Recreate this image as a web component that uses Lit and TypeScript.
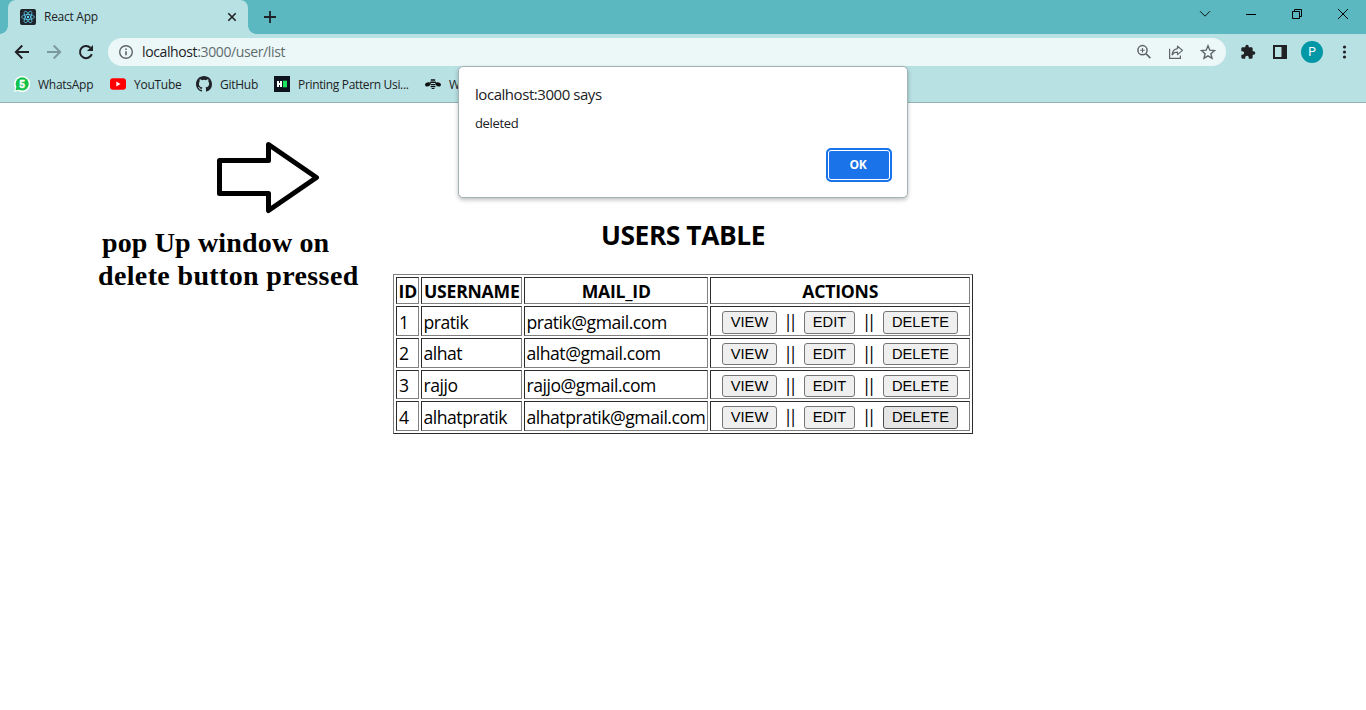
import { LitElement, html, css } from "lit";
import { customElement } from "lit/decorators.js";
import { classMap } from "lit/directives/class-map.js";

const users = [
  { id: 1, name: "pratik", mail: "pratik@gmail.com" },
  { id: 2, name: "alhat", mail: "alhat@gmail.com" },
  { id: 3, name: "rajjo", mail: "rajjo@gmail.com" },
  { id: 4, name: "alhatpratik", mail: "alhatpratik@gmail.com" },
];

@customElement("browser-chrome")
class BrowserChrome extends LitElement {
  static styles = css`
    :host { display: block; height: 103px; font-family: "Open Sans", sans-serif; color: #202124; }
    svg { display: block; flex: none; }
    .strip { display: flex; height: 34px; background: #5bb8c1; padding-left: 8px; box-sizing: border-box; }
    .tab { display: flex; align-items: center; width: 240px; height: 34px; box-sizing: border-box; background: #b8e1e4; border-radius: 8px 8px 0 0; padding: 0 10px 0 12px; }
    .curve { width: 8px; height: 8px; align-self: flex-end; background: radial-gradient(circle at 100% 0, transparent 7.5px, #b8e1e4 8px); }
    .curve.left { margin-left: -8px; background: radial-gradient(circle at 0 0, transparent 7.5px, #b8e1e4 8px); }
    .title { flex: 1; margin-left: 8px; font-size: 12px; line-height: 16px; letter-spacing: -0.27px; }
    .plus { margin: 11px 0 0 8px; }
    .win { margin-left: auto; display: flex; }
    .win span { width: 46px; height: 28px; display: flex; align-items: center; justify-content: center; }
    .bar { display: flex; align-items: center; height: 36px; background: #b8e1e4; padding-left: 14px; }
    .nav { display: flex; gap: 16px; width: 94px; }
    .omni { display: flex; align-items: center; width: 1118px; height: 28px; border-radius: 14px; background: #ecf8f8; box-sizing: border-box; padding: 0 10px; }
    .url { flex: 1; margin-left: 8px; font-size: 14px; line-height: 20px; letter-spacing: -0.38px; color: #202124; }
    .url span { color: #5f6b6e; }
    .acts { display: flex; gap: 16px; }
    .tools { display: flex; align-items: center; gap: 16px; margin-left: 14px; }
    .avatar { width: 22px; height: 22px; border-radius: 50%; background: #0097a7; color: #fff; font: 12px/22px Roboto, sans-serif; text-align: center; margin: 0 -3px; }
    .marks { display: flex; align-items: center; height: 32px; background: #b8e1e4; padding: 0 0 4px 14px; font-size: 12px; box-sizing: border-box; }
    .mark { display: flex; align-items: center; gap: 8px; height: 16px; margin-right: 16px; white-space: nowrap; letter-spacing: -0.27px; }
    .mark.a { width: 80px; }
    .mark.b { width: 70px; }
    .mark.c { width: 62px; }
    .mark.d { width: 135px; letter-spacing: -0.34px; }
    .five { font: 700 10.5px Roboto, sans-serif; letter-spacing: 0; }
    .line { height: 1px; background: #91b3b7; }
  `;
  render() {
    return html`
      <div class="strip">
        <div class="curve left"></div>
        <div class="tab">
          <svg width="16" height="16" viewBox="0 0 16 16"><rect width="16" height="16" rx="2" fill="#20232a"/><g fill="none" stroke="#61dafb" stroke-width=".7"><ellipse cx="8" cy="8" rx="6.4" ry="2.5"/><ellipse cx="8" cy="8" rx="6.4" ry="2.5" transform="rotate(60 8 8)"/><ellipse cx="8" cy="8" rx="6.4" ry="2.5" transform="rotate(120 8 8)"/></g><circle cx="8" cy="8" r="1.2" fill="#61dafb"/></svg>
          <span class="title">React App</span>
          <svg width="12" height="12" viewBox="0 0 12 12"><path d="M2.3 2.3l7.4 7.4M9.7 2.3l-7.4 7.4" stroke="#202124" stroke-width="1.6"/></svg>
        </div>
        <div class="curve"></div>
        <svg class="plus" width="12" height="12" viewBox="0 0 12 12"><path d="M6 0v12M0 6h12" stroke="#202124" stroke-width="1.8"/></svg>
        <div class="win">
          <span><svg width="12" height="8" viewBox="0 0 12 8"><path d="M1 1.2l5 5 5-5" fill="none" stroke="#111" stroke-width="1"/></svg></span>
          <span><svg width="10" height="10"><path d="M0 5.5h10" stroke="#000"/></svg></span>
          <span><svg width="10" height="10" viewBox="0 0 10 10"><path d="M.5 2.5h7v7h-7zM2.5 2.5v-2h7v7h-2" fill="none" stroke="#000"/></svg></span>
          <span><svg width="12" height="12" viewBox="0 0 12 12"><path d="M1 1l10 10M11 1L1 11" stroke="#000"/></svg></span>
        </div>
      </div>
      <div class="bar">
        <div class="nav">
          <svg width="16" height="16" viewBox="0 0 16 16"><path d="M15 8H2M8.3 1.5L1.8 8l6.5 6.5" fill="none" stroke="#202124" stroke-width="1.9"/></svg>
          <svg width="16" height="16" viewBox="0 0 16 16"><path d="M1 8h13M7.7 1.5L14.2 8l-6.5 6.5" fill="none" stroke="#7b999c" stroke-width="1.9"/></svg>
          <svg width="16" height="16" viewBox="0 0 16 16"><path d="M13.8 10.2A6.1 6.1 0 1 1 12.4 3.8" fill="none" stroke="#202124" stroke-width="2"/><path d="M15 1v6H9z" fill="#202124"/></svg>
        </div>
        <div class="omni">
          <svg width="16" height="16" viewBox="0 0 16 16"><circle cx="8" cy="8" r="6.3" fill="none" stroke="#5f6368" stroke-width="1.4"/><path d="M8 7.2v4M8 4.4v1.6" stroke="#5f6368" stroke-width="1.6"/></svg>
          <div class="url">localhost<span>:3000/user/list</span></div>
          <div class="acts">
            <svg width="16" height="16" viewBox="0 0 16 16"><g fill="none" stroke="#5f6368" stroke-width="1.5"><circle cx="6.5" cy="6.2" r="4.6"/><path d="M9.9 9.6l4.5 4.5"/><path d="M6.5 4v4.4M4.3 6.2h4.4" stroke-width="1.1"/></g></svg>
            <svg width="16" height="16" viewBox="0 0 16 16"><g fill="none" stroke="#5f6368" stroke-width="1.2"><path d="M1.6 4.8v9.6h10.8v-2.8"/><path d="M9.5 2.2l5 4.2-5 4.2V8.2C7 8.2 5.3 9 4.1 10.8 4.4 7.6 6.2 5 9.5 4.6z" stroke-linejoin="round"/></g></svg>
            <svg width="16" height="16" viewBox="0 0 16 16"><path d="M8 1.8l1.8 4.4 4.8.4-3.7 3.1 1.1 4.6L8 11.8l-4 2.5 1.1-4.6L1.4 6.6l4.8-.4z" fill="none" stroke="#5f6368" stroke-width="1.4"/></svg>
          </div>
        </div>
        <div class="tools">
          <svg width="16" height="16" viewBox="0 0 24 24"><path d="M20.5 11H19V7c0-1.1-.9-2-2-2h-4V3.5a2.5 2.5 0 0 0-5 0V5H4c-1.1 0-2 .9-2 2v3.8h1.5a2.7 2.7 0 0 1 0 5.4H2V20c0 1.1.9 2 2 2h3.8v-1.5a2.7 2.7 0 0 1 5.4 0V22H17c1.1 0 2-.9 2-2v-4h1.5a2.5 2.5 0 0 0 0-5z" fill="#202124"/></svg>
          <svg width="16" height="16" viewBox="0 0 16 16"><path d="M1 1h14v14H1zM3 3v10h6.5V3z" fill="#202124" fill-rule="evenodd"/></svg>
          <div class="avatar">P</div>
          <svg width="16" height="16" viewBox="0 0 16 16" fill="#202124"><circle cx="8.5" cy="3" r="1.6"/><circle cx="8.5" cy="8" r="1.6"/><circle cx="8.5" cy="13" r="1.6"/></svg>
        </div>
      </div>
      <div class="marks">
        <div class="mark a"><svg width="16" height="16" viewBox="0 0 16 16"><path d="M8 0a8 8 0 1 1-3.5 15L0 16l1.1-4A8 8 0 0 1 8 0z" fill="#fff"/><circle cx="8.2" cy="7.8" r="6.6" fill="#12c24b"/><path d="M1.5 14.5l.9-4 3 2.9z" fill="#12c24b"/><text class="five" x="8.1" y="11.6" fill="#fff" stroke="#fff" stroke-width=".4" text-anchor="middle">5</text></svg>WhatsApp</div>
        <div class="mark b"><svg width="16" height="16" viewBox="0 0 16 16"><rect y="2.3" width="16" height="11.4" rx="3" fill="#f00"/><path d="M6.3 5.6v4.8l4.2-2.4z" fill="#fff"/></svg>YouTube</div>
        <div class="mark c"><svg width="16" height="16" viewBox="0 0 16 16"><path fill="#1f2328" d="M8 0C3.58 0 0 3.58 0 8c0 3.54 2.29 6.53 5.47 7.59.4.07.55-.17.55-.38 0-.19-.01-.82-.01-1.49-2.01.37-2.53-.49-2.69-.94-.09-.23-.48-.94-.82-1.13-.28-.15-.68-.52-.01-.53.63-.01 1.08.58 1.23.82.72 1.21 1.87.87 2.33.66.07-.52.28-.87.51-1.07-1.78-.2-3.64-.89-3.64-3.95 0-.87.31-1.59.82-2.15-.08-.2-.36-1.02.08-2.12 0 0 .67-.21 2.2.82a7.6 7.6 0 0 1 4 0c1.53-1.04 2.2-.82 2.2-.82.44 1.1.16 1.92.08 2.12.51.56.82 1.27.82 2.15 0 3.07-1.87 3.75-3.65 3.95.29.25.54.73.54 1.48 0 1.07-.01 1.93-.01 2.2 0 .21.15.46.55.38A8.01 8.01 0 0 0 16 8c0-4.42-3.58-8-8-8z"/></svg>GitHub</div>
        <div class="mark d"><svg width="16" height="16" viewBox="0 0 16 16"><path fill="#0e141e" d="M0 0h16v16H0z"/><path fill="#fff" d="M3 5h2v2h1V5h2v6H6V9H5v2H3z"/><path fill="#1ce45f" d="M9 4.7h4v6.6H9z"/></svg>Printing Pattern Usi...</div>
        <div class="mark"><svg width="16" height="16" viewBox="0 0 16 16" fill="#111"><path d="M0 9C0 6.6 3.4 5.6 6 7L4.8 9.4C3.4 11 .6 11 0 9zM16 9c0-2.4-3.4-3.4-6-2l1.2 2.4c1.4 1.6 4.2 1.6 4.8-.4z"/><path d="M5.8 3.2h4.4v1.5H5.8zM5.2 5.5h5.6v1.5H5.2zM5.6 7.9h4.8v1.3H5.6zM5.6 10h4.8v1.2H5.6zM6.6 12h2.8v.9H6.6z"/></svg>W</div>
      </div>
      <div class="line"></div>
    `;
  }
}

@customElement("alert-dialog")
class AlertDialog extends LitElement {
  static styles = css`
    :host { display: block; box-sizing: border-box; width: 450px; height: 132px; border: 1px solid #a3b3b5; border-radius: 5px; background: #fff; box-shadow: 0 2px 4px rgba(0,0,0,.25); padding: 16px 15px 15px 16px; font-family: "Open Sans", sans-serif; color: #202124; }
    .head { font-size: 15px; line-height: 22px; letter-spacing: -0.45px; }
    .msg { font-size: 13px; line-height: 18px; margin-top: 9px; letter-spacing: -0.35px; }
    .foot { display: flex; justify-content: flex-end; margin-top: 16px; }
    .ok { box-sizing: border-box; width: 66px; height: 34px; border: 2px solid #1a73e8; border-radius: 5px; background: #1a73e8; box-shadow: inset 0 0 0 1px #fff; color: #fff; font: 700 12px/30px "Open Sans", sans-serif; letter-spacing: -0.3px; padding: 0 2px 0 0; text-align: center; }
  `;
  render() {
    return html`<div class="head">localhost:3000 says</div><div class="msg">deleted</div><div class="foot"><button class="ok">OK</button></div>`;
  }
}

@customElement("user-table")
class UserTable extends LitElement {
  static styles = css`
    :host { display: grid; box-sizing: border-box; width: 580px; height: 160px; grid-template-columns: 23px 101px 184px 260px; grid-template-rows: 27px 30px 30px 29px 30px; gap: 2px; padding: 2px; border: 1px solid; border-color: #808080 #2b2b2b #2b2b2b #808080; font: 17.6px "Open Sans", sans-serif; color: #000; }
    .cell { box-sizing: border-box; min-width: 0; border: 1px solid; border-color: #2b2b2b #808080 #808080 #2b2b2b; padding: 3px 0 0 1.5px; line-height: 25px; white-space: nowrap; letter-spacing: -0.48px; }
    .id { padding-left: 2px; }
    .raised { padding-top: 2px; }
    .th { font-weight: 700; text-align: center; padding: 1px 0 0 0.5px; letter-spacing: -0.22px; }
    .acts { display: flex; align-items: flex-start; padding: 4px 0 0 11px; }
    .sep { box-sizing: border-box; width: 27px; padding-right: 4.5px; text-align: center; line-height: 20px; letter-spacing: -4.7px; }
    .sep.wide { width: 28px; }
    button { box-sizing: border-box; height: 23px; border: 1px solid #767676; border-radius: 3px; background: #efefef; color: #000; font: 14.67px/20px "Liberation Sans", Arial, sans-serif; padding: 0 0 1px; }
    .raised button { height: 22px; padding-bottom: 0; }
    .view { width: 55px; }
    .edit { width: 51px; }
    .del { width: 75px; }
    .hot { background: #e5e5e5; border-color: #4f4f4f; }
  `;
  render() {
    return html`
      ${["ID", "USERNAME", "MAIL_ID", "ACTIONS"].map((h) => html`<div class="cell th">${h}</div>`)}
      ${users.map((u) => {
        const raised = u.id === 2 || u.id === 3;
        const cell = classMap({ cell: true, raised });
        return html`
        <div class=${classMap({ cell: true, id: true, raised })}>${u.id}</div><div class=${cell}>${u.name}</div><div class=${cell}>${u.mail}</div>
        <div class=${classMap({ cell: true, raised, acts: true })}><button class="view">VIEW</button><span class="sep">||</span><button class="edit">EDIT</button><span class="sep wide">||</span><button class=${classMap({ del: true, hot: u.id === 4 })}>DELETE</button></div>`;
      })}
    `;
  }
}

@customElement("app-root")
class AppRoot extends LitElement {
  static styles = css`
    :host { display: block; position: relative; width: 1366px; height: 710px; overflow: hidden; background: #fff; }
    .dialog { position: absolute; left: 458px; top: 66px; }
    .page { display: grid; grid-template-columns: 393px 580px; }
    .note { padding: 37px 0 0 98px; font: 700 28px/33px "Liberation Serif", serif; letter-spacing: 0.36px; color: #000; white-space: nowrap; }
    .arrow { display: block; margin: 0 0 11px 117px; }
    .first { padding-left: 4px; letter-spacing: 0.15px; }
    .title { margin: 114px 0 0; font: 700 26.4px/36px "Open Sans", sans-serif; text-align: center; letter-spacing: -0.45px; color: #000; }
    .table { margin-top: 21px; }
  `;
  render() {
    return html`
      <browser-chrome></browser-chrome>
      <div class="page">
        <div class="note">
          <svg class="arrow" width="106" height="75" viewBox="215 140 106 75"><path d="M219.5 160.5H268.5V144.5L316.5 177.5L268.5 210.5V193.5H219.5Z" fill="none" stroke="#000" stroke-width="5" stroke-linejoin="round"/></svg>
          <div class="first">pop Up window on</div><div>delete button pressed</div>
        </div>
        <div><h2 class="title">USERS TABLE</h2><user-table class="table"></user-table></div>
      </div>
      <alert-dialog class="dialog"></alert-dialog>
    `;
  }
}
